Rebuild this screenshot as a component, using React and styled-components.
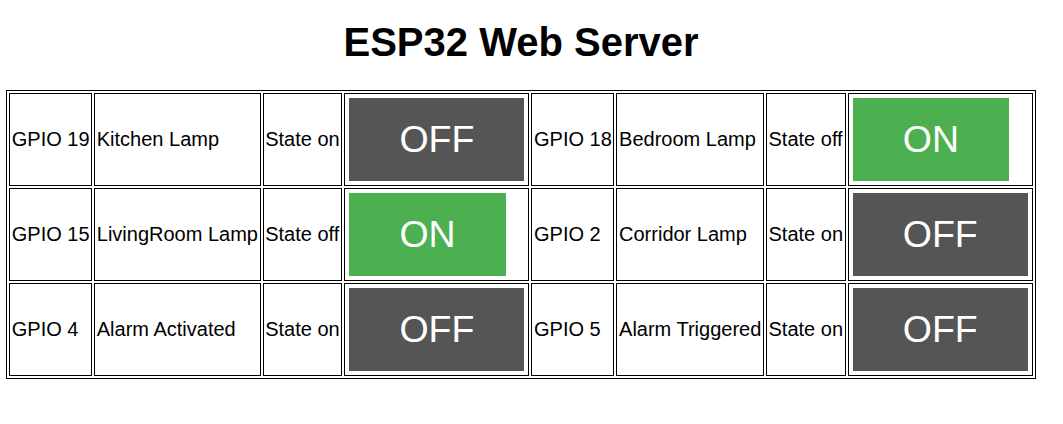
import React from "react";
import styled, { createGlobalStyle } from "styled-components";

const GlobalStyle = createGlobalStyle`
  html, body {
    margin: 0;
    padding: 0;
    background: #ffffff;
  }
  body {
    font-family: "Liberation Sans", Arial, sans-serif;
    color: #000000;
  }
`;

const Page = styled.div`
  width: 1042px;
  font-family: "Liberation Sans", Arial, sans-serif;
`;

const Title = styled.h1`
  margin: 19px 0 25px;
  font-size: 40px;
  font-weight: bold;
  line-height: 46px;
  height: 46px;
  text-align: center;
  color: #000000;
`;

const Table = styled.table`
  margin: 0 auto;
  border: 1px solid #000000;
  border-collapse: separate;
  border-spacing: 2px;
  font-size: 20px;
`;

const Cell = styled.td`
  border: 1px solid #000000;
  padding: 1.5px 1.6px;
  vertical-align: middle;
  white-space: nowrap;
  text-align: left;
`;

const ToggleButton = styled.button`
  display: inline-block;
  vertical-align: middle;
  margin: 2.5px;
  padding: 20px 50px;
  border: none;
  font-family: "Liberation Sans", Arial, sans-serif;
  font-size: 37.5px;
  line-height: normal;
  color: #ffffff;
  background-color: ${(p) => (p.$on ? "#4CAF50" : "#555555")};
  cursor: pointer;
`;

const rows = [
  [
    { gpio: "GPIO 19", name: "Kitchen Lamp", state: "on" },
    { gpio: "GPIO 18", name: "Bedroom Lamp", state: "off" },
  ],
  [
    { gpio: "GPIO 15", name: "LivingRoom Lamp", state: "off" },
    { gpio: "GPIO 2", name: "Corridor Lamp", state: "on" },
  ],
  [
    { gpio: "GPIO 4", name: "Alarm Activated", state: "on" },
    { gpio: "GPIO 5", name: "Alarm Triggered", state: "on" },
  ],
];

const Device = ({ d }) => (
  <>
    <Cell>{d.gpio}</Cell>
    <Cell>{d.name}</Cell>
    <Cell>State {d.state}</Cell>
    <Cell>
      <ToggleButton $on={d.state === "off"}>
        {d.state === "on" ? "OFF" : "ON"}
      </ToggleButton>
    </Cell>
  </>
);

export default function App() {
  return (
    <Page>
      <GlobalStyle />
      <Title>ESP32 Web Server</Title>
      <Table>
        <tbody>
          {rows.map((r, i) => (
            <tr key={i}>
              {r.map((d) => (
                <Device key={d.gpio} d={d} />
              ))}
            </tr>
          ))}
        </tbody>
      </Table>
    </Page>
  );
}
